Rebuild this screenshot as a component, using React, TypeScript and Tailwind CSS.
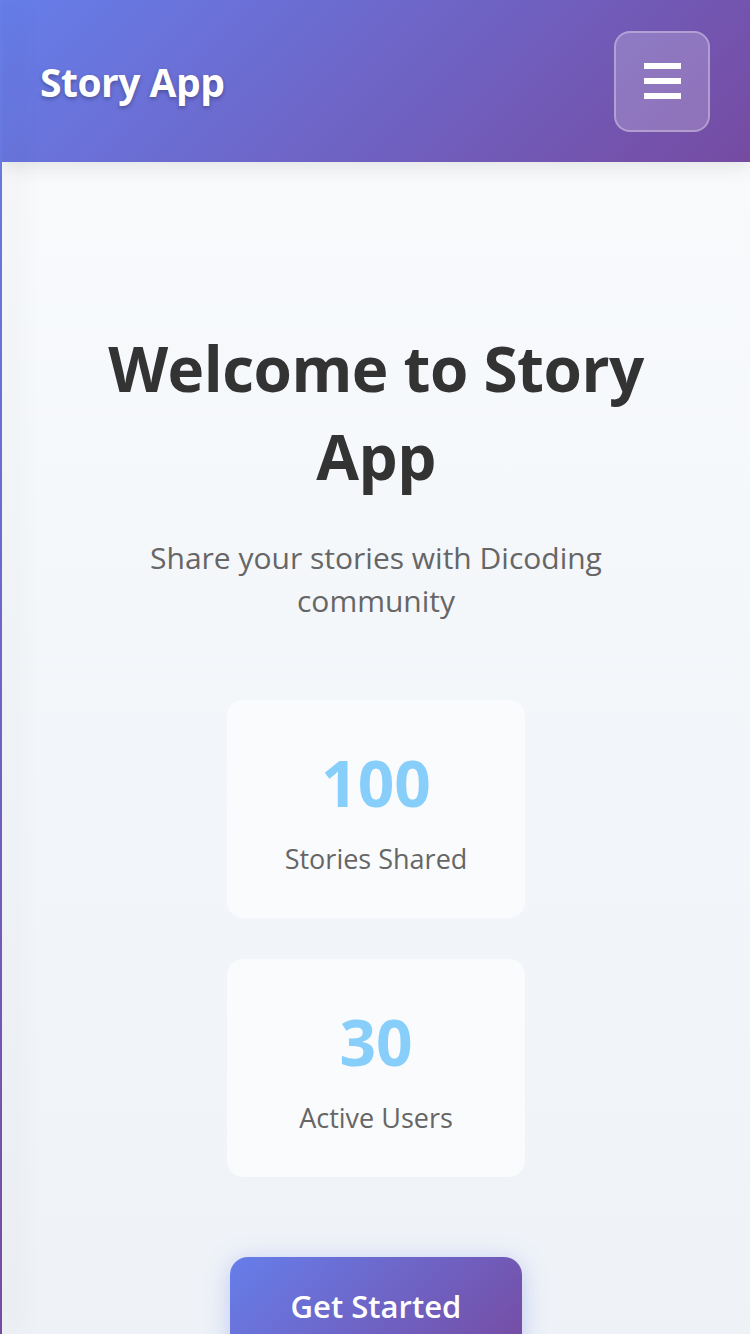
export default function App() {
  const font = { fontFamily: '"Open Sans", "Noto Sans", sans-serif' };

  return (
    <div className="relative min-h-screen overflow-hidden bg-[linear-gradient(135deg,#667eea_0%,#764ba2_100%)]" style={font}>
      {/* off-canvas drawer edge, casts the shadow over the page */}
      <div className="fixed left-0 top-0 z-30 h-full w-[2px] bg-[linear-gradient(180deg,#667eea,#764ba2)] shadow-[10px_0_28px_rgba(0,0,0,0.3)]" />

      <header className="relative z-20 flex h-[162px] items-center justify-between bg-[linear-gradient(135deg,#667eea_0%,#764ba2_100%)] pl-10 pr-10 shadow-[0_4px_20px_rgba(0,0,0,0.1)]">
        <h1 className="pt-[3px] text-[39px] font-bold tracking-[-0.5px] text-white [text-shadow:0_2px_4px_rgba(0,0,0,0.3)]">
          Story App
        </h1>
        <button className="flex h-[101px] w-[96px] flex-col items-center justify-center gap-[9px] rounded-2xl border-2 border-white/30 bg-white/20">
          <span className="block h-[6px] w-[37px] bg-white" />
          <span className="block h-[6px] w-[37px] bg-white" />
          <span className="block h-[6px] w-[37px] bg-white" />
        </button>
      </header>

      <main className="ml-[2px] flex min-h-[1172px] flex-col items-center bg-[linear-gradient(180deg,#f8fafc_0%,#eef2f7_100%)] px-8 pt-[162px] text-center">
        <h2 className="max-w-[620px] text-[62px] font-bold leading-[88px] tracking-[-0.5px] text-[#333]">
          Welcome to Story App
        </h2>
        <p className="mt-[36px] max-w-[500px] text-[30px] leading-[43px] text-[#666]">
          Share your stories with Dicoding community
        </p>

        <div className="mt-[78px] flex flex-col gap-[41px]">
          <StatCard value="100" label="Stories Shared" />
          <StatCard value="30" label="Active Users" />
        </div>

        <button className="mt-[80px] h-[100px] w-[292px] self-center rounded-[18px] bg-[linear-gradient(135deg,#667eea_0%,#764ba2_100%)] pb-[26px] pt-[24px] text-[31px] font-semibold text-white shadow-[0_4px_24px_rgba(102,126,234,0.35)]">
          Get Started
        </button>
      </main>
    </div>
  );
}

function StatCard({ value, label }: { value: string; label: string }) {
  return (
    <div className="flex h-[218px] w-[298px] flex-col items-center justify-center rounded-2xl bg-white/60 pt-[12px]">
      <div className="text-[64px] font-bold leading-none text-[#87cefa]">{value}</div>
      <div className="mt-[24px] text-[27px] text-[#666]">{label}</div>
    </div>
  );
}
